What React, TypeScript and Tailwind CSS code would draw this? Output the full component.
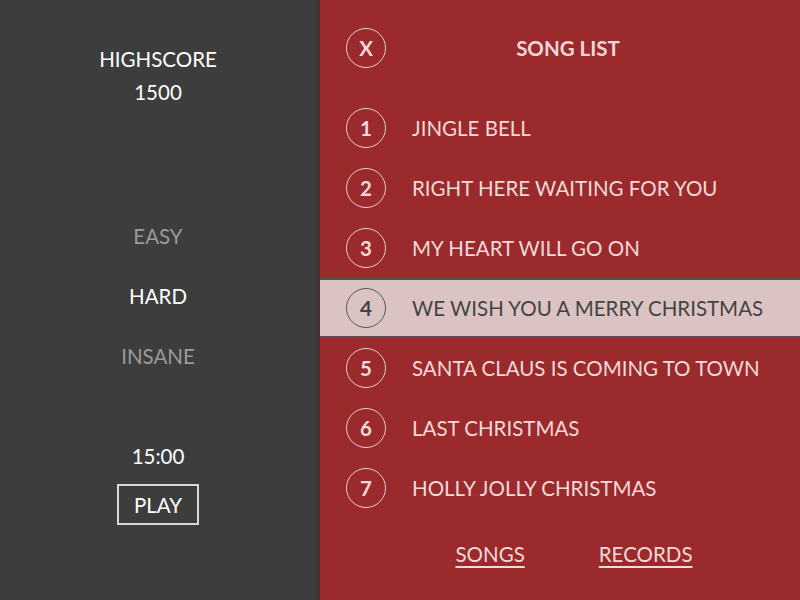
import { useState } from "react";

const SONGS = [
  "JINGLE BELL",
  "RIGHT HERE WAITING FOR YOU",
  "MY HEART WILL GO ON",
  "WE WISH YOU A MERRY CHRISTMAS",
  "SANTA CLAUS IS COMING TO TOWN",
  "LAST CHRISTMAS",
  "HOLLY JOLLY CHRISTMAS",
];

const LEVELS = ["EASY", "HARD", "INSANE"];

export default function App() {
  const [selected, setSelected] = useState(3);
  const [level, setLevel] = useState("HARD");

  return (
    <div
      className="flex h-[600px] w-[800px] overflow-hidden text-[20.5px]"
      style={{ fontFamily: "Lato, 'Noto Sans', sans-serif" }}
    >
      {/* left: score + difficulty */}
      <div className="flex w-[316px] flex-col items-center bg-[#3d3d3d] text-white">
        <div className="mt-[43px] leading-[33px]">HIGHSCORE</div>
        <div className="leading-[33px]">1500</div>

        <div className="mt-[97px] flex flex-col items-center">
          {LEVELS.map((l) => (
            <button
              key={l}
              onClick={() => setLevel(l)}
              className={
                "h-[60px] leading-[60px] " +
                (level === l ? "text-white" : "text-[#9a9a9a]")
              }
            >
              {l}
            </button>
          ))}
        </div>

        <div className="mt-[54px] leading-[32px]">15:00</div>
        <button className="mt-[12px] h-[41px] w-[82px] border-2 border-[#d8d8d8] leading-[36px]">
          PLAY
        </button>
      </div>
      <div className="w-[4px] bg-[#3f3431]" />

      {/* right: song list */}
      <div className="flex flex-1 flex-col bg-[#9b2a2c] text-[#f2dada]">
        <div className="mt-[18px] flex h-[60px] items-center pl-[26px] pr-[50px]">
          <div className="flex h-10 w-10 items-center justify-center rounded-full border border-[#e6cccc] font-bold">
            X
          </div>
          <div className="flex-1 text-center font-bold text-[#efd7d7]">SONG LIST</div>
        </div>

        <div className="mt-[20px] flex flex-col">
          {SONGS.map((s, i) => {
            const active = i === selected;
            return (
              <div
                key={s}
                onClick={() => setSelected(i)}
                className={
                  "flex h-[60px] items-center gap-[26px] pl-[26px] " +
                  (active
                    ? "border-y-2 border-[#5a5252] bg-[#dcc3c3] text-[#444444]"
                    : "")
                }
              >
                <div
                  className={
                    "flex h-10 w-10 shrink-0 items-center justify-center rounded-full border font-bold " +
                    (active ? "border-[#555555]" : "border-[#e6cccc]")
                  }
                >
                  {i + 1}
                </div>
                <span>{s}</span>
              </div>
            );
          })}
        </div>

        <div className="mt-[16px] flex justify-center gap-[74px] pl-[28px] leading-[40px]">
          <a className="underline decoration-2 underline-offset-4">SONGS</a>
          <a className="underline decoration-2 underline-offset-4">RECORDS</a>
        </div>
      </div>
    </div>
  );
}
